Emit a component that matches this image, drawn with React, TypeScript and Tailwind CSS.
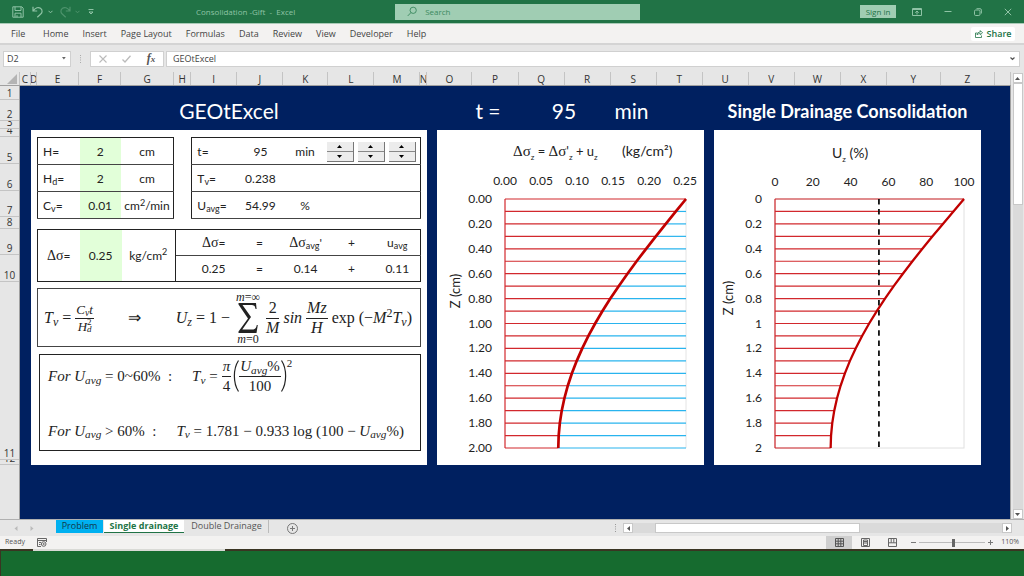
import React from "react";

const COLUMNS = ["", "C", "D", "E", "F", "G", "H", "I", "J", "K", "L", "M", "N", "O", "P", "Q", "R", "S", "T", "U", "V", "W", "X", "Y", "Z", ""];

const ROWS = [
  { n: "1", h: "h-[14px]" },
  { n: "2", h: "h-[21px]" },
  { n: "3", h: "h-[8px]" },
  { n: "4", h: "h-[8px]" },
  { n: "5", h: "h-[27px]" },
  { n: "6", h: "h-[27px]" },
  { n: "7", h: "h-[26px]" },
  { n: "8", h: "h-[12px]" },
  { n: "9", h: "h-[26px]" },
  { n: "10", h: "h-[27px]" },
  { n: "11", h: "h-[178px]" },
  { n: "12", h: "h-[5px]" },
];

const MENU = ["Home", "Insert", "Page Layout", "Formulas", "Data", "Review", "View", "Developer", "Help"];

const TV = 0.238;
const H = 2;

/* Degree of consolidation at depth z, from the series solution. */
function degree(z: number) {
  if (z === 0) return 1;
  let sum = 0;
  for (let m = 0; m < 60; m++) {
    const M = (Math.PI / 2) * (2 * m + 1);
    sum += (2 / M) * Math.sin((M * z) / H) * Math.exp(-M * M * TV);
  }
  return 1 - sum;
}

const DEPTHS = Array.from({ length: 21 }, (_, i) => i / 10);
const TICKS = Array.from({ length: 11 }, (_, i) => i / 5);

function TitleBar() {
  return (
    <header className="grid h-[23px] shrink-0 grid-cols-[395fr_245fr_384fr] items-center bg-[#217346] text-[#8fc3a5]">
      <div className="flex items-center">
        <button aria-label="Save" className="ml-3">
          <svg width="12" height="12" viewBox="0 0 12 12" fill="none" stroke="currentColor">
            <path d="M.8.8h9l1.400 1.400v9h-10.400zM3 .8v3.700h6v-3.700M3 11.200V7.200h6v4M5 9.200v2" />
          </svg>
        </button>
        <button aria-label="Undo" className="ml-2">
          <svg width="12" height="12" viewBox="0 0 12 12" fill="none" stroke="currentColor" strokeWidth="1.200">
            <path d="M1 .8v4.200h4.200M1.300 4.700C3.500 1.500 6.500.9 8.500 2.300c2.600 2 1.600 4.700 0 6L5.300 11.300" />
          </svg>
        </button>
        <Chevron className="ml-1" />
        <button aria-label="Redo" className="ml-1.5 opacity-40">
          <svg width="12" height="12" viewBox="0 0 12 12" fill="none" stroke="currentColor" strokeWidth="1.200">
            <path d="M11 .8v4.200H6.800M10.700 4.700C8.500 1.500 5.500.9 3.500 2.300c-2.600 2-1.600 4.700 0 6l3.200 3" />
          </svg>
        </button>
        <Chevron className="ml-1 opacity-40" />
        <button aria-label="Customize toolbar" className="ml-2">
          <svg width="6" height="6" viewBox="0 0 6 6" fill="none" stroke="currentColor">
            <path d="M.5.500h5M1 3l2 2 2-2z" />
          </svg>
        </button>
        <h1 className="ml-[102px] whitespace-pre text-[8px]">Consolidation -Gift  -  Excel</h1>
      </div>
      <label className="flex h-4 items-center gap-2 bg-[#a0cdb3] pl-3 text-[#3c8a5f]">
        <svg width="11" height="11" viewBox="0 0 11 11" fill="none" stroke="currentColor">
          <circle cx="6.700" cy="4.200" r="3.400" />
          <path d="M4.300 6.700.800 10.300" />
        </svg>
        <input aria-label="Search" placeholder="Search" className="w-full bg-transparent text-[8px] outline-none placeholder:text-[#3c8a5f]" />
      </label>
      <div className="flex items-center justify-end pr-3">
        <button className="h-[13px] w-9 bg-[#a0cdb3] text-[8px] leading-[13px] text-[#217346]">Sign in</button>
        <button aria-label="Ribbon display options" className="ml-4">
          <svg width="10" height="8" viewBox="0 0 10 8" fill="none" stroke="currentColor">
            <path d="M.5.500h9v7h-9zM.500 1.500h9M5 6.500V3M3.300 4.700 5 3l1.700 1.700" />
          </svg>
        </button>
        <button aria-label="Minimize" className="ml-[22px]">
          <svg width="8" height="8" viewBox="0 0 8 8" stroke="currentColor"><path d="M.500 3.500h7" /></svg>
        </button>
        <button aria-label="Restore" className="ml-[22px]">
          <svg width="8" height="8" viewBox="0 0 8 8" fill="none" stroke="currentColor">
            <rect x=".5" y="2" width="5.500" height="5.500" rx="1.200" />
            <path d="M2.500.700h3.500a1.400 1.400 0 0 1 1.400 1.400v3.400" />
          </svg>
        </button>
        <button aria-label="Close" className="ml-[22px]">
          <svg width="8" height="8" viewBox="0 0 8 8" stroke="currentColor"><path d="m.800.800 6.400 6.400m0-6.400L.800 7.200" /></svg>
        </button>
      </div>
    </header>
  );
}

function Chevron({ className = "" }: { className?: string }) {
  return (
    <svg className={className} width="5" height="4" viewBox="0 0 5 4" fill="none" stroke="currentColor">
      <path d="m.500.800 2 2 2-2" />
    </svg>
  );
}

function Ribbon() {
  return (
    <nav className="flex h-[22px] shrink-0 items-center border-t border-b-2 border-t-[#a9cbb7] border-b-[#d4d4d4] bg-[#f3f2f1] pr-[9px] pl-[11px] text-[9px] text-[#444]">
      <button className="w-8 text-left">File</button>
      <div className="flex flex-1 gap-[14px]">
        {MENU.map((m) => (
          <button key={m}>{m}</button>
        ))}
      </div>
      <button className="flex h-[14px] w-11 items-center justify-center gap-1 rounded-xs bg-white font-semibold text-[#217346]">
        <svg width="8" height="8" viewBox="0 0 8 8" fill="none" stroke="currentColor" strokeWidth=".8">
          <path d="M2.500 3H.500v4.500h6V5.500M2 5c.3-2 1.500-3 3.300-3V.600l2.200 2.200-2.200 2V3.500C4 3.500 2.800 4 2 5z" />
        </svg>
        Share
      </button>
    </nav>
  );
}

function FormulaBar() {
  return (
    <div className="flex h-[27px] shrink-0 items-center bg-[#e6e6e6] pr-1 pl-[3px] text-[9px] text-[#444]">
      <label className="flex h-4 w-[68px] items-center border border-[#d0d0d0] bg-white pr-1">
        <input aria-label="Name box" defaultValue="D2" className="w-full min-w-0 pl-[3px] outline-none" />
        <svg width="4" height="3" viewBox="0 0 4 3" fill="#666"><path d="M0 0h4L2 2.500z" /></svg>
      </label>
      <svg className="ml-2" width="3" height="8" viewBox="0 0 3 8" fill="#aaa">
        <path d="M1 0h1v1H1zM1 2.300h1v1H1zM1 4.600h1v1H1zM1 7h1v1H1z" />
      </svg>
      <div className="ml-2 flex h-4 w-[74px] items-center justify-around border border-[#d0d0d0] bg-white">
        <button aria-label="Cancel">
          <svg width="8" height="8" viewBox="0 0 8 8" stroke="#bbb" strokeWidth="1.100"><path d="m.500.500 7 7m0-7-7 7" /></svg>
        </button>
        <button aria-label="Enter">
          <svg width="9" height="8" viewBox="0 0 9 8" fill="none" stroke="#bbb" strokeWidth="1.300"><path d="M.500 4.500 3 7l5.500-6.300" /></svg>
        </button>
        <button aria-label="Insert function" className="font-['Liberation_Serif',serif] text-[12px] leading-3 font-bold text-[#555] italic">
          f<span className="text-[9px]">x</span>
        </button>
      </div>
      <label className="ml-0.5 flex h-4 flex-1 items-center border border-[#d0d0d0] bg-white pr-1">
        <input aria-label="Formula" defaultValue="GEOtExcel" className="w-full pl-[6px] outline-none" />
        <svg width="5" height="4" viewBox="0 0 5 4" fill="none" stroke="#555" strokeWidth="1.200"><path d="m.500.500 2 2 2-2" /></svg>
      </label>
    </div>
  );
}

function ColumnHeads() {
  return (
    <div className="grid h-[14px] shrink-0 grid-cols-[20fr_11fr_6fr_42fr_42fr_53fr_17fr_46fr_46fr_45fr_46fr_46fr_7fr_45fr_46fr_46fr_46fr_46fr_46fr_46fr_46fr_46fr_46fr_54fr_54fr_16fr] border-b border-[#a0a0a0] text-[10px] leading-[14px] text-[#333]">
      {COLUMNS.map((c, i) => (
        <div key={i} className="flex min-w-0 justify-center overflow-hidden border-r border-[#c4c4c4]">
          {i === 0 ? (
            <svg className="ml-1 self-center" width="10" height="10" viewBox="0 0 10 10" fill="#b4b4b4"><path d="M10 0v10H0z" /></svg>
          ) : (
            c
          )}
        </div>
      ))}
    </div>
  );
}

function RowHeads() {
  return (
    <div className="w-5 shrink-0 border-r border-[#a0a0a0] text-[10px] text-[#333]">
      {ROWS.map((r) => (
        <div key={r.n} className={"flex items-end justify-center overflow-hidden border-b border-[#c4c4c4] leading-[12px] " + r.h}>
          {r.n}
        </div>
      ))}
    </div>
  );
}

const Greek = ({ children }: { children: React.ReactNode }) => (
  <span className="font-['Liberation_Serif',serif] text-[14px]">{children}</span>
);

function SoilTable() {
  const rows = [
    [<>H=</>, "2", <>cm</>],
    [<>H<sub>d</sub>=</>, "2", <>cm</>],
    [<>C<sub>v</sub>=</>, "0.01", <>cm<sup>2</sup>/min</>],
  ];
  return (
    <table aria-label="Soil data" className="w-full table-fixed border border-[#222]">
      <colgroup>
        <col className="w-[31%]" />
        <col className="w-[30%]" />
        <col className="w-[39%]" />
      </colgroup>
      <tbody>
        {rows.map((r, i) => (
          <tr key={i} className="h-[27px] border-b border-[#444]">
            <td className="pt-0.5 pl-[5px]">{r[0]}</td>
            <td className="bg-[#e2ffd9] pt-0.5 text-center">{r[1]}</td>
            <td className="pt-0.5 text-center whitespace-nowrap">{r[2]}</td>
          </tr>
        ))}
      </tbody>
    </table>
  );
}

function Spinner({ label }: { label: string }) {
  return (
    <div className="flex h-5 w-[27px] flex-col border-r border-b border-[#777] bg-[#ececec]">
      <button aria-label={label + " up"} className="flex flex-1 items-center justify-center border-b border-[#888]">
        <svg width="5" height="3" viewBox="0 0 5 3"><path d="M0 3h5L2.500 0z" /></svg>
      </button>
      <button aria-label={label + " down"} className="flex flex-1 items-center justify-center">
        <svg width="5" height="3" viewBox="0 0 5 3"><path d="M0 0h5L2.500 3z" /></svg>
      </button>
    </div>
  );
}

function TimeTable() {
  return (
    <table aria-label="Time and consolidation" className="w-full table-fixed border border-[#222]">
      <colgroup>
        <col className="w-[20%]" />
        <col className="w-[20%]" />
        <col className="w-[19%]" />
        <col className="w-[41%]" />
      </colgroup>
      <tbody>
        <tr className="h-[27px] border-b border-[#444]">
          <td className="pt-0.5 pl-[5px]">t=</td>
          <td className="pt-0.5 text-center">95</td>
          <td className="pt-0.5 text-center">min</td>
          <td className="pt-0.5">
            <div className="flex gap-1">
              <Spinner label="Minutes" />
              <Spinner label="Tens" />
              <Spinner label="Hundreds" />
            </div>
          </td>
        </tr>
        <tr className="h-[27px] border-b border-[#444]">
          <td className="pt-0.5 pl-[5px]">T<sub>v</sub>=</td>
          <td className="pt-0.5 text-center">0.238</td>
          <td />
          <td />
        </tr>
        <tr className="h-[27px] border-b border-[#444]">
          <td className="pt-0.5 pl-[5px] whitespace-nowrap">U<sub>avg</sub>=</td>
          <td className="pt-0.5 text-center">54.99</td>
          <td className="pt-0.5 text-center">%</td>
          <td />
        </tr>
      </tbody>
    </table>
  );
}

function StressTable() {
  return (
    <table aria-label="Stress split" className="w-full table-fixed border border-[#222] text-center">
      <colgroup>
        <col className="w-[11%]" />
        <col className="w-[11%]" />
        <col className="w-[14%]" />
        <col className="w-[4%]" />
        <col className="w-[12%]" />
        <col className="w-[12%]" />
        <col className="w-[12%]" />
        <col className="w-[12%]" />
        <col className="w-[12%]" />
      </colgroup>
      <tbody>
        <tr className="h-[26px]">
          <td rowSpan={2}><Greek>Δσ</Greek>=</td>
          <td rowSpan={2} className="bg-[#e2ffd9]">0.25</td>
          <td rowSpan={2} className="border-r border-[#222]">kg/cm<sup>2</sup></td>
          <td className="border-b border-[#444]" />
          <td className="border-b border-[#444]"><Greek>Δσ</Greek>=</td>
          <td className="border-b border-[#444]">=</td>
          <td className="border-b border-[#444] whitespace-nowrap"><Greek>Δσ</Greek><sub>avg</sub>'</td>
          <td className="border-b border-[#444]">+</td>
          <td className="border-b border-[#444]">u<sub>avg</sub></td>
        </tr>
        <tr className="h-[26px]">
          <td />
          <td>0.25</td>
          <td>=</td>
          <td>0.14</td>
          <td>+</td>
          <td>0.11</td>
        </tr>
      </tbody>
    </table>
  );
}

function Frac({ top, bottom, small = false }: { top: React.ReactNode; bottom: React.ReactNode; small?: boolean }) {
  return (
    <span className={"inline-flex flex-col items-center text-center " + (small ? "text-[13px] leading-[15px]" : "leading-[18px]")}>
      <span className="w-full border-b border-[#222] px-px pb-px">{top}</span>
      <span>{bottom}</span>
    </span>
  );
}

function SeriesFormula() {
  return (
    <div className="flex h-[59px] items-center justify-between border border-[#444] pr-2 pl-1.5 text-[16px] whitespace-nowrap">
      <span className="flex items-center gap-1">
        <span><i>T<sub>v</sub></i> =</span>
        <Frac
          small
          top={<i>C<sub>v</sub>t</i>}
          bottom={
            <i className="inline-flex items-center">
              H
              <span className="flex flex-col text-[9px] leading-[7px]">
                <span className="not-italic">2</span>
                <span>d</span>
              </span>
            </i>
          }
        />
      </span>
      <span>⇒</span>
      <span className="flex items-center gap-1">
        <span><i>U<sub>z</sub></i> = 1 −</span>
        <span className="mx-0.5 flex flex-col items-center text-[12px] leading-[12px]">
          <span><i>m</i>=∞</span>
          <svg width="20" height="30" viewBox="0 0 20 30" fill="#222">
            <path d="M.5 0H18l.6 6h-1C17 2.800 16 2 13 2H4.500l8.500 12L4.300 26.500H14c3 0 4-1 4.800-4.500h1L18.500 30H.5v-1.500L10 15.500.500 1.500z" />
          </svg>
          <span><i>m</i>=0</span>
        </span>
        <Frac top="2" bottom={<i>M</i>} />
        <i>sin</i>
        <Frac top={<i>Mz</i>} bottom={<i>H</i>} />
        <span>exp (−<i>M</i><sup>2</sup><i>T<sub>v</sub></i>)</span>
      </span>
    </div>
  );
}

function Paren({ flip = false }: { flip?: boolean }) {
  return (
    <svg width="6" height="32" viewBox="0 0 6 32" fill="none" stroke="#222" strokeWidth="1.200">
      <path d={flip ? "M.500.500c5.500 8.500 5.500 22.500 0 31" : "M5.500.500c-5.500 8.500-5.500 22.500 0 31"} />
    </svg>
  );
}

function TimeFactorFormula() {
  return (
    <div className="ml-0.5 flex h-[97px] flex-col justify-between border border-[#222] px-2 pt-0.5 pb-2 whitespace-nowrap">
      <div className="flex items-center">
        <span className="mr-5"><i>For U<sub>avg</sub></i> = 0~60% &nbsp;:</span>
        <span className="mr-1"><i>T<sub>v</sub></i> =</span>
        <Frac top={<i>π</i>} bottom="4" />
        <span className="ml-0.5 flex items-center">
          <Paren />
          <Frac top={<><i>U<sub>avg</sub></i>%</>} bottom="100" />
          <Paren flip />
        </span>
        <span className="self-start text-[11px] leading-3">2</span>
      </div>
      <div>
        <span className="mr-5"><i>For U<sub>avg</sub></i> &gt; 60% &nbsp;:</span>
        <span><i>T<sub>v</sub></i> = 1.781 − 0.933 log (100 − <i>U<sub>avg</sub></i>%)</span>
      </div>
    </div>
  );
}

function StressChart() {
  const x0 = 68, x1 = 249, y0 = 69, y1 = 318;
  const y = (z: number) => y0 + ((y1 - y0) * z) / 2;
  const x = (u: number) => x0 + (x1 - x0) * u;
  return (
    <svg role="img" aria-label="Stress against depth" viewBox="0 0 267 335" className="h-auto w-full bg-white font-['Lato',sans-serif]" fill="#222" fontSize="12">
      <text x="76" y="26" fontSize="13" xmlSpace="preserve">
        <tspan fontFamily="Liberation Serif" fontSize="15">Δσ</tspan>
        <tspan fontSize="8" dy="4">z</tspan>
        <tspan dy="-4"> = </tspan>
        <tspan fontFamily="Liberation Serif" fontSize="15">Δσ</tspan>'
        <tspan fontSize="8" dy="4">z</tspan>
        <tspan dy="-4"> + u</tspan>
        <tspan fontSize="8" dy="4">z</tspan>
      </text>
      <text x="185" y="26" fontSize="14">(kg/cm²)</text>
      {["0.00", "0.05", "0.10", "0.15", "0.20", "0.25"].map((t, i) => (
        <text key={t} x={x0 + i * 36} y="55" textAnchor="middle">{t}</text>
      ))}
      {TICKS.map((z) => (
        <text key={z} x="55" y={y(z) + 4} textAnchor="end">{z.toFixed(2)}</text>
      ))}
      <text transform="translate(23 161) rotate(-90)" textAnchor="middle" fontSize="13">Z (cm)</text>
      <path d={`M${x1} ${y0}V${y1}`} stroke="#e4e4e4" />
      {DEPTHS.map((z) => (
        <g key={z}>
          <path d={`M${x(degree(z))} ${y(z)}H${x1}`} stroke="#29b4ee" strokeWidth="1.200" />
          <path d={`M${x0} ${y(z)}H${x(degree(z))}`} stroke="#d2282d" strokeWidth="1.200" />
        </g>
      ))}
      <path d={`M${x0} ${y0}V${y1}`} stroke="#d2282d" strokeWidth="1.200" />
      <polyline points={DEPTHS.map((z) => `${x(degree(z))},${y(z)}`).join(" ")} fill="none" stroke="#c00000" strokeWidth="2.700" />
    </svg>
  );
}

function DegreeChart() {
  const x0 = 61, x1 = 250, y0 = 69, y1 = 318;
  const y = (z: number) => y0 + ((y1 - y0) * z) / 2;
  const x = (u: number) => x0 + (x1 - x0) * u;
  return (
    <svg role="img" aria-label="Degree of consolidation against depth" viewBox="0 0 267 335" className="h-auto w-full bg-white font-['Lato',sans-serif]" fill="#222" fontSize="12">
      <text x="118" y="28" fontSize="14" xmlSpace="preserve">
        U<tspan fontSize="8" dy="4">z</tspan>
        <tspan dy="-4"> (%)</tspan>
      </text>
      {[0, 20, 40, 60, 80, 100].map((t) => (
        <text key={t} x={x(t / 100)} y="56" textAnchor="middle">{t}</text>
      ))}
      {TICKS.map((z) => (
        <text key={z} x="48" y={y(z) + 4} textAnchor="end">{z}</text>
      ))}
      <text transform="translate(19 168) rotate(-90)" textAnchor="middle" fontSize="13">Z (cm)</text>
      <rect x={x0} y={y0} width={x1 - x0} height={y1 - y0} fill="none" stroke="#e0e0e0" />
      {DEPTHS.map((z) => (
        <path key={z} d={`M${x0} ${y(z)}H${x(degree(z))}`} stroke="#d2282d" strokeWidth="1.200" />
      ))}
      <path d={`M${x0} ${y0}V${y1}`} stroke="#d2282d" strokeWidth="1.200" />
      <path d={`M${x(0.5499)} ${y0}V${y1}`} stroke="#111" strokeWidth="1.800" strokeDasharray="5.500 4.600" />
      <polyline points={DEPTHS.map((z) => `${x(degree(z))},${y(z)}`).join(" ")} fill="none" stroke="#c00000" strokeWidth="2.300" />
    </svg>
  );
}

function Sheet() {
  return (
    <main className="grid flex-1 grid-cols-[396fr_267fr_267fr] content-start gap-x-[10px] border-r border-[#a0a0a0] bg-[#002060] pr-[29px] pl-[11px] font-['Lato',sans-serif] text-[12px] text-[#222]">
      <h2 className="flex h-11 items-center justify-center pt-[6px] text-[21px] text-white">GEOtExcel</h2>
      <div className="grid h-11 grid-cols-[102fr_50fr_85fr_30fr] items-center pt-[6px] text-center text-[21px] text-white">
        <span>t =</span>
        <span>95</span>
        <span>min</span>
      </div>
      <h2 className="flex h-11 items-center justify-center pt-[6px] text-[18px] font-bold whitespace-nowrap text-white">Single Drainage Consolidation</h2>
      <section className="bg-white px-1.5 pt-[7px] pb-[13px]">
        <div className="grid grid-cols-[137fr_229fr] gap-[17px]">
          <SoilTable />
          <TimeTable />
        </div>
        <div className="mt-[10px]">
          <StressTable />
        </div>
        <div className="mt-[6px] flex flex-col gap-[7px] font-['Liberation_Serif',serif] text-[15px]">
          <SeriesFormula />
          <TimeFactorFormula />
        </div>
      </section>
      <StressChart />
      <DegreeChart />
    </main>
  );
}

function ArrowButton({ label, d, className = "" }: { label: string; d: string; className?: string }) {
  return (
    <button aria-label={label} className={"flex size-[10px] shrink-0 items-center justify-center border border-[#c8c8c8] bg-white " + className}>
      <svg width="5" height="5" viewBox="0 0 5 5" fill="#555"><path d={d} /></svg>
    </button>
  );
}

function SheetTabs() {
  return (
    <div className="flex h-[17px] shrink-0 items-center border-t border-[#b0b0b0] bg-[#e6e6e6] text-[9px]">
      <div className="flex w-14 gap-3 pl-[14px]">
        <svg width="4" height="5" viewBox="0 0 4 5" fill="#bbb"><path d="M3.500 0v5L.500 2.500z" /></svg>
        <svg width="4" height="5" viewBox="0 0 4 5" fill="#bbb"><path d="M.500 0v5l3-2.500z" /></svg>
      </div>
      <div role="tablist" className="flex items-center gap-px self-start leading-[11px]">
        <button role="tab" className="h-[13px] w-[47px] bg-[#00b0f0] pb-1 text-[#10374a]">Problem</button>
        <button role="tab" aria-selected className="h-[13px] w-20 border-b border-[#217346] bg-white pb-1 font-bold whitespace-nowrap text-[#217346]">Single drainage</button>
        <button role="tab" className="h-[13px] w-[84px] border-r border-[#bbb] pb-1 whitespace-nowrap text-[#555]">Double Drainage</button>
      </div>
      <button aria-label="New sheet" className="ml-[18px]">
        <svg width="11" height="11" viewBox="0 0 11 11" fill="none" stroke="#777">
          <circle cx="5.500" cy="5.500" r="5" />
          <path d="M5.500 3v5M3 5.500h5" />
        </svg>
      </button>
      <div className="ml-auto flex w-[40%] items-center pr-3">
        <svg width="3" height="8" viewBox="0 0 3 8" fill="#999">
          <path d="M1 0h1v1H1zM1 2.300h1v1H1zM1 4.600h1v1H1zM1 7h1v1H1z" />
        </svg>
        <ArrowButton label="Scroll left" d="M4 0v5L1 2.500z" className="ml-[6px]" />
        <div className="grid h-[10px] flex-1 grid-cols-[22fr_205fr_142fr] bg-[#dadada]">
          <div className="col-start-2 border border-[#c8c8c8] bg-white" />
        </div>
        <ArrowButton label="Scroll right" d="M1 0v5l3-2.500z" />
      </div>
    </div>
  );
}

function StatusBar() {
  return (
    <div className="flex h-[13px] shrink-0 items-center bg-[#f3f2f1] pr-[5px] pl-[5px] text-[7px] text-[#555]">
      <span>Ready</span>
      <button aria-label="Record macro" className="ml-3">
        <svg width="10" height="9" viewBox="0 0 10 9" fill="none" stroke="#666">
          <path d="M4 8.500H.500v-8h9V4M.500 2.500h9M2 4.500h2M2 6.500h1.500" />
          <circle cx="6.700" cy="6" r="2.300" />
          <circle cx="6.700" cy="6" r=".6" />
        </svg>
      </button>
      <div className="ml-auto flex h-full items-center">
        <button aria-label="Normal view" className="flex h-full w-[26px] items-center justify-center bg-[#cfcfcf]">
          <svg width="9" height="9" viewBox="0 0 9 9" fill="none" stroke="#555"><path d="M.500.500h8v8h-8zM3.200.500v8M5.800.500v8M.500 3.200h8M.500 5.800h8" /></svg>
        </button>
        <button aria-label="Page layout view" className="flex w-[27px] justify-center">
          <svg width="9" height="9" viewBox="0 0 9 9" fill="none" stroke="#666"><path d="M.500.500h8v8h-8zM2.500 2h4v5.500h-4zM3 3.500h3M3 5h3" /></svg>
        </button>
        <button aria-label="Page break preview" className="flex w-[27px] justify-center">
          <svg width="9" height="9" viewBox="0 0 9 9" fill="none" stroke="#666"><path d="M.500.500h8v8h-8zM.500 4.800h8M3.200.500v4.300M5.800.500v4.300" /></svg>
        </button>
        <button aria-label="Zoom out" className="ml-[5px]">
          <svg width="5" height="5" viewBox="0 0 5 5" stroke="#777"><path d="M0 2.500h5" /></svg>
        </button>
        <input
          type="range"
          aria-label="Zoom"
          min={0}
          max={100}
          defaultValue={52}
          className="mx-[3px] h-px w-[66px] appearance-none bg-[#bbb] [&::-webkit-slider-thumb]:h-2 [&::-webkit-slider-thumb]:w-[3px] [&::-webkit-slider-thumb]:appearance-none [&::-webkit-slider-thumb]:bg-[#666]"
        />
        <button aria-label="Zoom in">
          <svg width="5" height="5" viewBox="0 0 5 5" stroke="#777"><path d="M0 2.500h5M2.500 0v5" /></svg>
        </button>
        <span className="ml-2">110%</span>
      </div>
    </div>
  );
}

export default function App() {
  return (
    <div className="flex min-h-screen flex-col bg-[#e6e6e6] font-['Open_Sans',sans-serif]">
      <TitleBar />
      <Ribbon />
      <FormulaBar />
      <div className="flex flex-1">
        <div className="flex min-w-0 flex-1 flex-col">
          <ColumnHeads />
          <div className="flex flex-1">
            <RowHeads />
            <Sheet />
          </div>
        </div>
        <div className="flex w-[13px] flex-col items-center pt-px">
          <ArrowButton label="Scroll up" d="M0 4h5L2.500 1z" />
          <div className="grid w-[10px] flex-1 grid-rows-[122fr_304fr] bg-[#dadada]">
            <div className="border border-[#c8c8c8] bg-white" />
          </div>
          <ArrowButton label="Scroll down" d="M0 1h5L2.500 4z" />
        </div>
      </div>
      <SheetTabs />
      <StatusBar />
      <footer className="h-[27px] shrink-0 border-l border-[#3a3522] bg-[#166b2f]">
        <div className="h-0.5 bg-[#3a3522] pl-8">
          <div className="h-full w-48 bg-[#d9dad6]" />
        </div>
      </footer>
    </div>
  );
}
